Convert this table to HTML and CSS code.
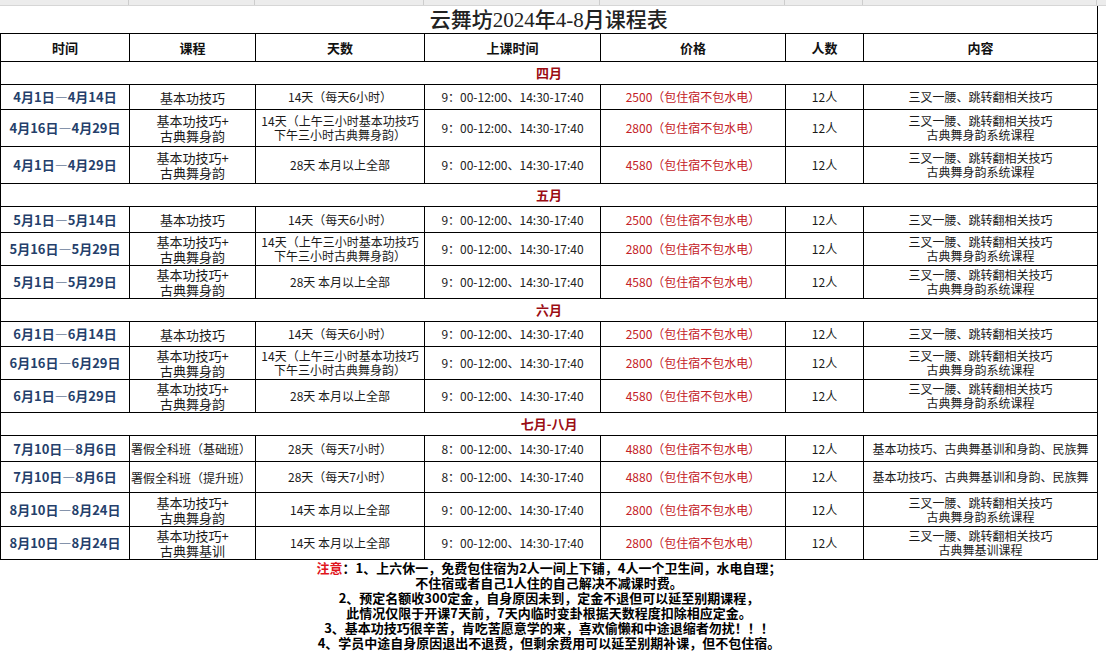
FILE: index.html
```html
<!DOCTYPE html>
<html lang="zh-CN">
<head>
<meta charset="utf-8">
<title>云舞坊2024年4-8月课程表</title>
<link rel="stylesheet" href="styles.css">
</head>
<body>
<div class="topbar">
  <span class="c1"></span><span class="c2"></span><span class="c3"></span><span class="c4"></span><span class="c5"></span><span class="c6"></span><span class="c7"></span><span class="c8"></span>
</div>
<table class="sheet">
  <colgroup>
    <col class="w1"><col class="w2"><col class="w3"><col class="w4"><col class="w5"><col class="w6"><col class="w7">
  </colgroup>
  <tr class="title-row"><td colspan="7" class="title">云舞坊2024年4-8月课程表</td></tr>
  <tr class="head-row">
    <td>时间</td><td>课程</td><td>天数</td><td>上课时间</td><td>价格</td><td>人数</td><td>内容</td>
  </tr>

  <tr class="sec-row"><td colspan="7" class="sec">四月</td></tr>
  <tr class="h25">
    <td class="date">4月1日—4月14日</td><td class="course">基本功技巧</td><td>14天（每天6小时）</td><td class="time">9：00-12:00、14:30-17:40</td><td class="price">2500（包住宿不包水电）</td><td>12人</td><td>三叉一腰、跳转翻相关技巧</td>
  </tr>
  <tr class="h37">
    <td class="date">4月16日—4月29日</td><td class="course">基本功技巧+<br>古典舞身韵</td><td>14天（上午三小时基本功技巧<br>下午三小时古典舞身韵）</td><td class="time">9：00-12:00、14:30-17:40</td><td class="price">2800（包住宿不包水电）</td><td>12人</td><td>三叉一腰、跳转翻相关技巧<br>古典舞身韵系统课程</td>
  </tr>
  <tr class="h37">
    <td class="date">4月1日—4月29日</td><td class="course">基本功技巧+<br>古典舞身韵</td><td>28天 本月以上全部</td><td class="time">9：00-12:00、14:30-17:40</td><td class="price">4580（包住宿不包水电）</td><td>12人</td><td>三叉一腰、跳转翻相关技巧<br>古典舞身韵系统课程</td>
  </tr>

  <tr class="sec-row"><td colspan="7" class="sec">五月</td></tr>
  <tr class="h26">
    <td class="date">5月1日—5月14日</td><td class="course">基本功技巧</td><td>14天（每天6小时）</td><td class="time">9：00-12:00、14:30-17:40</td><td class="price">2500（包住宿不包水电）</td><td>12人</td><td>三叉一腰、跳转翻相关技巧</td>
  </tr>
  <tr class="h33">
    <td class="date">5月16日—5月29日</td><td class="course">基本功技巧+<br>古典舞身韵</td><td>14天（上午三小时基本功技巧<br>下午三小时古典舞身韵）</td><td class="time">9：00-12:00、14:30-17:40</td><td class="price">2800（包住宿不包水电）</td><td>12人</td><td>三叉一腰、跳转翻相关技巧<br>古典舞身韵系统课程</td>
  </tr>
  <tr class="h33">
    <td class="date">5月1日—5月29日</td><td class="course">基本功技巧+<br>古典舞身韵</td><td>28天 本月以上全部</td><td class="time">9：00-12:00、14:30-17:40</td><td class="price">4580（包住宿不包水电）</td><td>12人</td><td>三叉一腰、跳转翻相关技巧<br>古典舞身韵系统课程</td>
  </tr>

  <tr class="sec-row"><td colspan="7" class="sec">六月</td></tr>
  <tr class="h25">
    <td class="date">6月1日—6月14日</td><td class="course">基本功技巧</td><td>14天（每天6小时）</td><td class="time">9：00-12:00、14:30-17:40</td><td class="price">2500（包住宿不包水电）</td><td>12人</td><td>三叉一腰、跳转翻相关技巧</td>
  </tr>
  <tr class="h33">
    <td class="date">6月16日—6月29日</td><td class="course">基本功技巧+<br>古典舞身韵</td><td>14天（上午三小时基本功技巧<br>下午三小时古典舞身韵）</td><td class="time">9：00-12:00、14:30-17:40</td><td class="price">2800（包住宿不包水电）</td><td>12人</td><td>三叉一腰、跳转翻相关技巧<br>古典舞身韵系统课程</td>
  </tr>
  <tr class="h33">
    <td class="date">6月1日—6月29日</td><td class="course">基本功技巧+<br>古典舞身韵</td><td>28天 本月以上全部</td><td class="time">9：00-12:00、14:30-17:40</td><td class="price">4580（包住宿不包水电）</td><td>12人</td><td>三叉一腰、跳转翻相关技巧<br>古典舞身韵系统课程</td>
  </tr>

  <tr class="sec-row"><td colspan="7" class="sec">七月-八月</td></tr>
  <tr class="h26">
    <td class="date">7月10日—8月6日</td><td class="course tight">署假全科班（基础班）</td><td>28天（每天7小时）</td><td class="time">8：00-12:00、14:30-17:40</td><td class="price">4880（包住宿不包水电）</td><td>12人</td><td>基本功技巧、古典舞基训和身韵、民族舞</td>
  </tr>
  <tr class="h31">
    <td class="date">7月10日—8月6日</td><td class="course tight">署假全科班（提升班）</td><td>28天（每天7小时）</td><td class="time">8：00-12:00、14:30-17:40</td><td class="price">4880（包住宿不包水电）</td><td>12人</td><td>基本功技巧、古典舞基训和身韵、民族舞</td>
  </tr>
  <tr class="h34">
    <td class="date">8月10日—8月24日</td><td class="course">基本功技巧+<br>古典舞身韵</td><td>14天 本月以上全部</td><td class="time">9：00-12:00、14:30-17:40</td><td class="price">2800（包住宿不包水电）</td><td>12人</td><td>三叉一腰、跳转翻相关技巧<br>古典舞身韵系统课程</td>
  </tr>
  <tr class="h33">
    <td class="date">8月10日—8月24日</td><td class="course">基本功技巧+<br>古典舞基训</td><td>14天 本月以上全部</td><td class="time">9：00-12:00、14:30-17:40</td><td class="price">2800（包住宿不包水电）</td><td>12人</td><td>三叉一腰、跳转翻相关技巧<br>古典舞基训课程</td>
  </tr>

  <tr class="notes-row">
    <td colspan="7" class="notes">
      <div><span class="warn">注意</span>：1、上六休一，免费包住宿为2人一间上下铺，4人一个卫生间，水电自理；</div>
      <div>不住宿或者自己1人住的自己解决不减课时费。</div>
      <div>2、预定名额收300定金，自身原因未到，定金不退但可以延至别期课程，</div>
      <div>此情况仅限于开课7天前，7天内临时变卦根据天数程度扣除相应定金。</div>
      <div>3、基本功技巧很辛苦，肯吃苦愿意学的来，喜欢偷懒和中途退缩者勿扰！！！</div>
      <div>4、学员中途自身原因退出不退费，但剩余费用可以延至别期补课，但不包住宿。</div>
    </td>
  </tr>
</table>
</body>
</html>
```

FILE: styles.css
```css
* { box-sizing: border-box; }
html, body { margin: 0; padding: 0; background: #fff; }
body {
  width: 1106px;
  height: 652px;
  overflow: hidden;
  font-family: "Noto Sans CJK SC", sans-serif;
  color: #111;
}

.topbar {
  display: flex;
  height: 6px;
  background: #ececec;
  border-bottom: 1px solid #d6d6d6;
}
.topbar span { height: 100%; border-right: 1px solid #cdcdcd; }
.topbar .c1 { width: 129px; }
.topbar .c2 { width: 126px; }
.topbar .c3 { width: 169px; }
.topbar .c4 { width: 176px; }
.topbar .c5 { width: 185px; }
.topbar .c6 { width: 78px; }
.topbar .c7 { width: 234px; }
.topbar .c8 { flex: 1; border-right: none; }

.sheet {
  border-collapse: collapse;
  table-layout: fixed;
  width: 1098px;
}
.w1 { width: 129px; }
.w2 { width: 126px; }
.w3 { width: 169px; }
.w4 { width: 176px; }
.w5 { width: 185px; }
.w6 { width: 78px; }
.w7 { width: 234px; }

.sheet td {
  border: 1px solid #000;
  padding: 0;
  text-align: center;
  vertical-align: middle;
  font-size: 12px;
  line-height: 14px;
  white-space: nowrap;
  overflow: hidden;
  color: #1a1a1a;
}

.title-row { height: 27px; }
.sheet td.title {
  border-top: none;
  border-left: none;
  font-family: "Liberation Serif", "Noto Sans CJK SC", serif;
  font-size: 21px;
  font-weight: 500;
  line-height: 26px;
  color: #222;
  padding-top: 1px;
}

.head-row { height: 28px; }
.head-row td { font-size: 13px; font-weight: 700; color: #111; }

.sec-row { height: 23px; }
.sheet td.sec {
  font-size: 13px;
  font-weight: 700;
  color: #9b0d14;
}

.h25 { height: 25px; }
.h26 { height: 26px; }
.h31 { height: 31px; }
.h33 { height: 33px; }
.h34 { height: 34px; }
.h37 { height: 37px; }

.sheet td.date {
  font-size: 13px;
  font-weight: 700;
  color: #253f6b;
}
.sheet td.course { font-size: 13px; line-height: 15px; }
.sheet td.course.tight { font-size: 12px; text-align: left; padding-left: 1px; }
.sheet td.time { font-size: 12px; color: #222; }
.sheet td.price { color: #c32026; }

.notes-row { height: 92px; }
.sheet td.notes {
  border-left: none;
  border-right: none;
  border-bottom: none;
  vertical-align: top;
  padding-top: 0;
  font-size: 13px;
  line-height: 15px;
  font-weight: 700;
  color: #000;
}
.warn { color: #e0141c; }
```
